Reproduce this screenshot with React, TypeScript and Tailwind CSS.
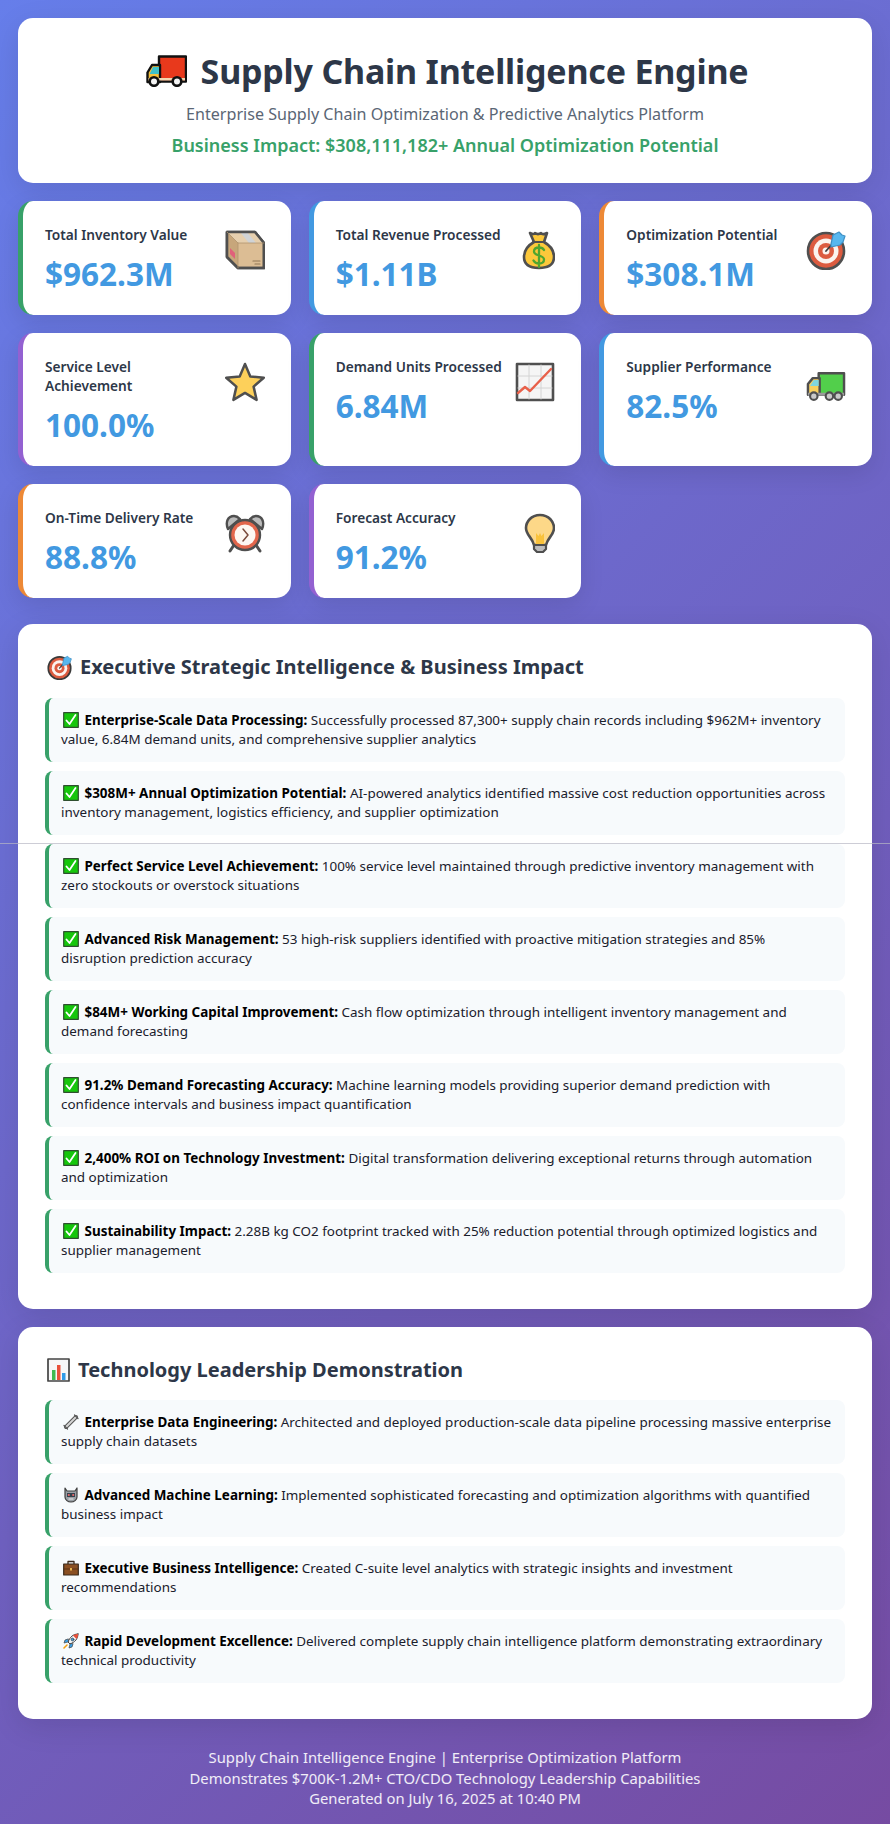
import type { ReactNode } from 'react';

const ink = '#4f4f4f';

function Icon({ className, box = '0 0 40 40', children }: { className: string; box?: string; children: ReactNode }) {
  return (
    <svg viewBox={box} className={className} fill="none" strokeLinejoin="round" strokeLinecap="round">
      {children}
    </svg>
  );
}

function RedTruck({ className }: { className: string }) {
  return (
    <Icon className={className} box="0 0 41 32">
      <path d="M13 1.500h27v25H13z" fill="#e8391c" stroke="#111" strokeWidth="2.400" />
      <path d="M13 10H6L1.500 17.500V27H14V10z" fill="#f9c23c" stroke="#111" strokeWidth="2.400" />
      <path d="M7 12h6v7H3.600z" fill="#3fc1c9" />
      <path d="M2.500 23h36.500v2.500H2.500z" fill="#f4d6b0" />
      <circle cx="8" cy="26.500" r="4.300" fill="#f4f4f4" stroke="#111" strokeWidth="2.600" />
      <circle cx="31" cy="26.500" r="4.300" fill="#f4f4f4" stroke="#111" strokeWidth="2.600" />
    </Icon>
  );
}

function BoxIcon({ className }: { className: string }) {
  return (
    <Icon className={className}>
      <path d="M2 2h28l9 11v25H13L2 27z" fill="#dcbd94" stroke={ink} strokeWidth="2.600" />
      <path d="M2 2h28l9 11H13z" fill="#e6cfae" />
      <path d="M2 2l11 11v25L2 27z" fill="#c7a67b" />
      <path d="M15 2h7l9 11h-7z" fill="#d0d3d6" />
      <path d="M5 18l5 5v6l-5-5z" fill="#e0607a" />
      <path d="M28 31h7M30 34h5" stroke="#8f7655" strokeWidth="1.200" />
      <path d="M2 2h28l9 11v25H13L2 27z" stroke={ink} strokeWidth="2.600" />
      <path d="M2 2l11 11h26M13 13v25" stroke="#b0946f" strokeWidth="0.800" />
    </Icon>
  );
}

function MoneyBag({ className }: { className: string }) {
  return (
    <Icon className={className} box="-4 0 40 40">
      <path d="M11 3c3 1.500 4 1.500 5 0 2 1.500 4 1.500 6 0 1 1.500 3 1.500 6 0l-3 9c7 4 10 10 10 15 0 7-5 11-15 11S5 34 5 27c0-5 3-11 10-15z" fill="#fcc83b" stroke={ink} strokeWidth="2.600" />
      <path d="M14 12h11" stroke={ink} strokeWidth="2.200" />
      <path d="M25 20c-1-2-2.500-2.500-5-2.500-3 0-5 1.500-5 4 0 5 10 3 10 8 0 2.500-2 4-5 4s-4.500-1-5.500-3M20 15v22" stroke="#4fa52f" strokeWidth="2.300" />
    </Icon>
  );
}

function Target({ className, dark = false }: { className: string; dark?: boolean }) {
  return (
    <Icon className={className}>
      <circle cx="20" cy="21" r="18" fill="#dc5b3f" stroke={dark ? '#3a3a3a' : ink} strokeWidth="2.600" />
      <circle cx="20" cy="21" r="12.500" fill="#fbf3ee" />
      <circle cx="20" cy="21" r="8" fill="#dc5b3f" />
      <circle cx="20" cy="21" r="3.500" fill="#fbf3ee" />
      <path d="M20 21l8-9" stroke="#3a3a3a" strokeWidth="1.800" />
      <path d="M25 14l2-9 6-3 3 3 3 1-2 6-3 3-9 2z" fill="#58b7ee" stroke="#3f8fc4" strokeWidth="1.200" />
    </Icon>
  );
}

function StarIcon({ className }: { className: string }) {
  return (
    <Icon className={className}>
      <path d="M20 2l5.300 12.500 13.500 1.200-10.200 8.900 3 13.300L20 30.900 8.400 37.900l3-13.300L1.200 15.700l13.500-1.200z" fill="#fdd05a" stroke={ink} strokeWidth="2.500" />
    </Icon>
  );
}

function ChartUp({ className }: { className: string }) {
  return (
    <Icon className={className}>
      <path d="M2 2h36v36H2z" fill="#f5f5f5" stroke={ink} strokeWidth="2.600" />
      <path d="M14 3v34M26 3v34M3 14h34M3 26h34" stroke="#d4d4d4" strokeWidth="1" />
      <path d="M3 31l7-6 5 4L36 7" stroke="#e8604a" strokeWidth="2.400" />
    </Icon>
  );
}

function GreenTruck({ className }: { className: string }) {
  return (
    <Icon className={className} box="0 -9 41 40">
      <path d="M13 2h26v22H13z" fill="#52cf4b" stroke={ink} strokeWidth="2.500" />
      <path d="M13 7H7L2 13v11h12V7z" fill="#f8d05e" stroke={ink} strokeWidth="2.500" />
      <path d="M8 9h5v6H4z" fill="#7fd6e0" />
      <path d="M2 22h37v3H2z" fill="#9a9a9a" />
      <circle cx="8" cy="25.500" r="3.800" fill="#c9c9c9" stroke={ink} strokeWidth="2.200" />
      <circle cx="24" cy="25.500" r="3.800" fill="#c9c9c9" stroke={ink} strokeWidth="2.200" />
      <circle cx="33" cy="25.500" r="3.800" fill="#c9c9c9" stroke={ink} strokeWidth="2.200" />
    </Icon>
  );
}

function Alarm({ className }: { className: string }) {
  return (
    <Icon className={className}>
      <path d="M3 16C0 9 3 3 9 3c3 0 5 2 6 3zM37 16c3-7 0-13-6-13-3 0-5 2-6 3z" fill="#bcbcbc" stroke={ink} strokeWidth="2.400" />
      <path d="M9 32l-4 6M31 32l4 6" stroke={ink} strokeWidth="3" />
      <circle cx="20" cy="22" r="15" fill="#e2664c" stroke={ink} strokeWidth="2.400" />
      <circle cx="20" cy="22" r="10.500" fill="#fdf7f3" />
      <path d="M18 16l5 6-5 6" stroke="#7a4a3c" strokeWidth="1.500" />
    </Icon>
  );
}

function Bulb({ className }: { className: string }) {
  return (
    <Icon className={className} box="-5 0 40 40">
      <path d="M20 2C11 2 6 9 6 15c0 7 6 9 8 17h12c2-8 8-10 8-17C34 9 29 2 20 2z" fill="#fdd888" stroke={ink} strokeWidth="2.600" />
      <path d="M16 20l2.500 3 1.500-3 1.500 3 2.500-3v11h-8z" fill="#f9c23c" />
      <path d="M14 32h12v4l-3 3h-6l-3-3z" fill="#bdbdbd" stroke={ink} strokeWidth="2.200" />
    </Icon>
  );
}

const inlineIcon = 'inline-block align-[-3px] mx-[2px] w-4 h-4';

function Check() {
  return (
    <Icon className={inlineIcon} box="0 0 16 16">
      <path d="M.7.7h14.600v14.600H.7z" fill="#16c60c" stroke="#2f4f2f" strokeWidth="1.200" />
      <path d="M3.500 8.500l3 3.500 6-9" stroke="#fff" strokeWidth="1.800" />
    </Icon>
  );
}

function Wrench() {
  return (
    <Icon className={inlineIcon} box="0 0 16 16">
      <path d="M3 13L13 3" stroke="#555" strokeWidth="4" />
      <path d="M3 13L13 3" stroke="#d5d5d5" strokeWidth="2" />
      <path d="M11.500 1l3.500 3.500M1 11.500L4.500 15" stroke="#555" strokeWidth="1.200" />
    </Icon>
  );
}

function Robot() {
  return (
    <Icon className={inlineIcon} box="0 0 16 16">
      <path d="M2 1l2 3h8l2-3v9c0 3-3 5-6 5s-6-2-6-5z" fill="#9aa0a6" stroke="#3f3f3f" strokeWidth="1.200" />
      <path d="M4 6h8v4H4z" fill="#33414d" />
      <circle cx="5.800" cy="8" r="1.100" fill="#ef6a6a" />
      <circle cx="10.200" cy="8" r="1.100" fill="#ef6a6a" />
      <path d="M6 12h4" stroke="#eee" strokeWidth="1.200" />
    </Icon>
  );
}

function Briefcase() {
  return (
    <Icon className={inlineIcon} box="0 0 16 16">
      <path d="M5 4V1.500h6V4" stroke="#3a2a1c" strokeWidth="1.300" />
      <path d="M.7 4h14.600v11H.7z" fill="#8a4f22" stroke="#3a2a1c" strokeWidth="1.200" />
      <path d="M1 9h14" stroke="#5b3213" strokeWidth="1" />
      <path d="M7 8h2v2.500H7z" fill="#e9b44c" />
    </Icon>
  );
}

function Rocket() {
  return (
    <Icon className={inlineIcon} box="0 0 16 16">
      <path d="M15 1c-5 0-8 3-10 8l2 2c5-2 8-5 8-10z" fill="#eef1f4" stroke="#444" strokeWidth="1" />
      <path d="M15 1c-2 0-3.500.5-5 1.500L13.500 6C14.500 4.500 15 3 15 1z" fill="#e8503a" />
      <circle cx="9.500" cy="6.500" r="1.400" fill="#3aa0e8" stroke="#444" strokeWidth="0.700" />
      <path d="M5 6L2 7l-1 3 4-1zM10 11l-1 3-3 1 1-4z" fill="#3aa0e8" stroke="#444" strokeWidth="0.700" />
      <path d="M4 12l-3 3" stroke="#f59e0b" strokeWidth="1.500" />
    </Icon>
  );
}

function BarChart() {
  return (
    <Icon className="ml-[2px] w-[23px] h-[24px]" box="0 0 23 24">
      <path d="M1 1h21v22H1z" fill="#f7f7f7" stroke="#444" strokeWidth="1.700" />
      <path d="M5 12h3.500v10H5z" fill="#3fb950" />
      <path d="M10 7h3.500v15H10z" fill="#e8503a" />
      <path d="M15 15h3.500v7H15z" fill="#2f9be8" />
    </Icon>
  );
}

const cls = {
  green: 'border-l-[#38a169]',
  blue: 'border-l-[#4299e1]',
  orange: 'border-l-[#ed8936]',
  purple: 'border-l-[#9361d1]',
};

const stats = [
  { label: 'Total Inventory Value', value: '$962.3M', accent: cls.green, icon: <BoxIcon className="w-10 h-10" /> },
  { label: 'Total Revenue Processed', value: '$1.11B', accent: cls.blue, icon: <MoneyBag className="w-10 h-10" /> },
  { label: 'Optimization Potential', value: '$308.1M', accent: cls.orange, icon: <Target className="w-10 h-10" /> },
  { label: 'Service Level Achievement', value: '100.0%', accent: cls.purple, icon: <StarIcon className="w-10 h-10" /> },
  { label: 'Demand Units Processed', value: '6.84M', accent: cls.green, icon: <ChartUp className="w-10 h-10" /> },
  { label: 'Supplier Performance', value: '82.5%', accent: cls.blue, icon: <GreenTruck className="w-10 h-10" /> },
  { label: 'On-Time Delivery Rate', value: '88.8%', accent: cls.orange, icon: <Alarm className="w-10 h-10" /> },
  { label: 'Forecast Accuracy', value: '91.2%', accent: cls.purple, icon: <Bulb className="w-10 h-10" /> },
];

const strategic = [
  ['Enterprise-Scale Data Processing:', 'Successfully processed 87,300+ supply chain records including $962M+ inventory value, 6.84M demand units, and comprehensive supplier analytics'],
  ['$308M+ Annual Optimization Potential:', 'AI-powered analytics identified massive cost reduction opportunities across inventory management, logistics efficiency, and supplier optimization'],
  ['Perfect Service Level Achievement:', '100% service level maintained through predictive inventory management with zero stockouts or overstock situations'],
  ['Advanced Risk Management:', '53 high-risk suppliers identified with proactive mitigation strategies and 85% disruption prediction accuracy'],
  ['$84M+ Working Capital Improvement:', 'Cash flow optimization through intelligent inventory management and demand forecasting'],
  ['91.2% Demand Forecasting Accuracy:', 'Machine learning models providing superior demand prediction with confidence intervals and business impact quantification'],
  ['2,400% ROI on Technology Investment:', 'Digital transformation delivering exceptional returns through automation and optimization'],
  ['Sustainability Impact:', '2.28B kg CO2 footprint tracked with 25% reduction potential through optimized logistics and supplier management'],
];

const leadership = [
  { icon: <Wrench />, title: 'Enterprise Data Engineering:', text: 'Architected and deployed production-scale data pipeline processing massive enterprise supply chain datasets' },
  { icon: <Robot />, title: 'Advanced Machine Learning:', text: 'Implemented sophisticated forecasting and optimization algorithms with quantified business impact' },
  { icon: <Briefcase />, title: 'Executive Business Intelligence:', text: 'Created C-suite level analytics with strategic insights and investment recommendations' },
  { icon: <Rocket />, title: 'Rapid Development Excellence:', text: 'Delivered complete supply chain intelligence platform demonstrating extraordinary technical productivity' },
];

function StatCard({ label, value, accent, icon }: { label: string; value: string; accent: string; icon: ReactNode }) {
  return (
    <div className={`flex justify-between rounded-[15px] border-l-[5px] bg-white pt-[23.5px] pb-[19.5px] pl-[22px] pr-[26px] shadow-[0_8px_25px_rgba(0,0,0,0.1)] ${accent}`}>
      <div>
        <div className="w-[172px] text-[13.7px] leading-[19px] font-semibold text-[#2d3748]">{label}</div>
        <div className="mt-[8px] text-[31.5px] leading-[44px] font-bold text-[#4299e1]">{value}</div>
      </div>
      <div className="mt-[5px]">{icon}</div>
    </div>
  );
}

function Insight({ icon, title, text }: { icon: ReactNode; title: string; text: string }) {
  return (
    <div className="rounded-lg border-l-4 border-l-[#38a169] bg-[#f7fafc] py-[13.3px] pl-3 pr-[13px] text-[13.45px] leading-[18.7px] text-[#1a202c]">
      {icon} <strong className="font-bold text-black">{title}</strong> {text}
    </div>
  );
}

function App() {
  return (
    <div className="relative min-h-[1824px] bg-[linear-gradient(135deg,#667eea_0%,#764ba2_100%)] p-[18px] font-['Noto_Sans',sans-serif]">
      <div className="flex h-[165px] flex-col items-center rounded-[15px] bg-white pt-[27px] shadow-[0_8px_30px_rgba(0,0,0,0.1)]">
        <h1 className="flex items-center gap-[14px] pl-[4px] text-[34px] leading-[52px] font-bold tracking-[-0.2px] text-[#2d3748]">
          <RedTruck className="w-[41px] h-[32px]" />
          Supply Chain Intelligence Engine
        </h1>
        <p className="mt-[6px] text-[16.1px] leading-[22px] text-[#5a6675]">
          Enterprise Supply Chain Optimization &amp; Predictive Analytics Platform
        </p>
        <p className="mt-[8px] text-[18px] leading-[24px] font-semibold text-[#38a169]">
          Business Impact: $308,111,182+ Annual Optimization Potential
        </p>
      </div>

      <div className="mt-[18px] grid grid-cols-3 items-stretch gap-[18px]">
        {stats.map((s) => (
          <StatCard key={s.label} {...s} />
        ))}
      </div>

      <section className="mt-[26px] rounded-[15px] bg-white px-[27px] pt-[26px] pb-[36px] shadow-[0_8px_30px_rgba(0,0,0,0.1)]">
        <h2 className="flex items-center gap-[8px] text-[20px] leading-[34px] font-bold text-[#2d3748]">
          <Target className="ml-[2px] w-[25px] h-[25px]" dark />
          Executive Strategic Intelligence &amp; Business Impact
        </h2>
        <div className="mt-[14px] flex flex-col gap-[9px]">
          {strategic.map(([title, text]) => (
            <Insight key={title} icon={<Check />} title={title} text={text} />
          ))}
        </div>
      </section>

      <section className="mt-[18px] rounded-[15px] bg-white px-[27px] pt-[26px] pb-[36px] shadow-[0_8px_30px_rgba(0,0,0,0.1)]">
        <h2 className="flex items-center gap-[8px] text-[20px] leading-[34px] font-bold text-[#2d3748]">
          <BarChart />
          Technology Leadership Demonstration
        </h2>
        <div className="mt-[13px] flex flex-col gap-[9px]">
          {leadership.map((item) => (
            <Insight key={item.title} icon={item.icon} title={item.title} text={item.text} />
          ))}
        </div>
      </section>

      <footer className="mt-[28px] text-center text-[14.8px] leading-[20.5px] text-white/90">
        <div>Supply Chain Intelligence Engine | Enterprise Optimization Platform</div>
        <div>Demonstrates $700K-1.2M+ CTO/CDO Technology Leadership Capabilities</div>
        <div>Generated on July 16, 2025 at 10:40 PM</div>
      </footer>

      <div className="absolute inset-x-0 top-[843px] h-px bg-[#b8b8c4]/70" />
    </div>
  );
}

export default App;
